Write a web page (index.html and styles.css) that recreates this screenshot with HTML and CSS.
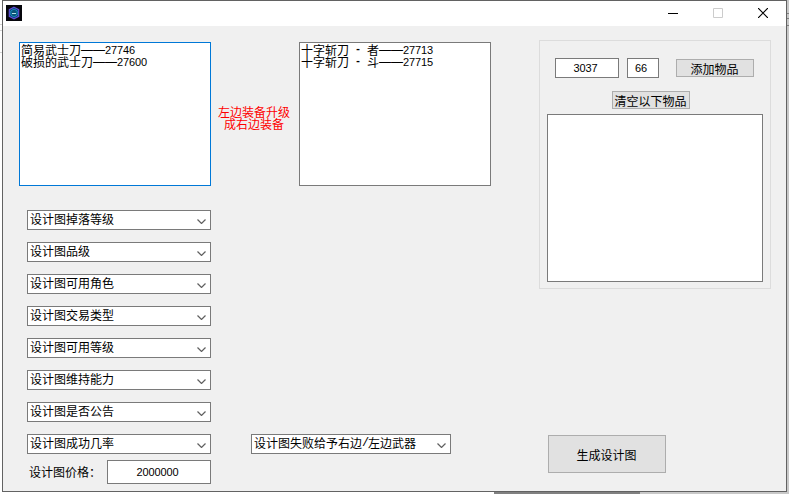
FILE: index.html
```html
<!DOCTYPE html>
<html lang="zh-CN">
<head>
<meta charset="utf-8">
<title>设计图</title>
<link rel="stylesheet" href="styles.css">
</head>
<body>
<div class="desktop">
<div class="window">
  <header class="titlebar">
    <svg class="app-icon" width="16" height="16" viewBox="0 0 16 16">
      <rect width="16" height="16" fill="#06060c"/>
      <path d="M8 2.2 12.7 4.6v6.8L8 13.8 3.3 11.4V4.6z" fill="#0b3c66" stroke="#5f4fd8" stroke-width="1.2"/>
      <path d="M8 4 11.2 5.8v4.4L8 12 4.8 10.2V5.8z" fill="#0b5478" stroke="#178fc4"/>
      <path d="M6 8.5h4" stroke="#b6e0e8"/>
    </svg>
    <div class="controls">
      <svg width="10" height="10" viewBox="0 0 10 10"><path d="M0 5.5h10" stroke="#000"/></svg>
      <svg width="10" height="10" viewBox="0 0 10 10"><path d="M.5.5h9v9h-9z" fill="none" stroke="#ccc"/></svg>
      <svg width="10" height="10" viewBox="0 0 10 10"><path d="M0 0 10 10M10 0 0 10" stroke="#000" stroke-width="1.2"/></svg>
    </div>
  </header>
  <main class="client">
    <section class="left">
      <div class="upgrade">
        <div class="box list focused"><div class="row">简易武士刀<span class="dash">——</span><span class="num">27746</span></div><div class="row">破损的武士刀<span class="dash">——</span><span class="num">27600</span></div></div>
        <div class="hint">左边装备升级<br>成右边装备</div>
        <div class="box list"><div class="row">十字斩刀<span class="gap hyphen"> - </span>者<span class="dash">——</span><span class="num">27713</span></div><div class="row">十字斩刀<span class="gap hyphen"> - </span>斗<span class="dash">——</span><span class="num">27715</span></div></div>
      </div>
      <div class="options">
        <div class="combos">
          <div class="box combo">设计图掉落等级<svg class="chev" viewBox="0 0 9 5"><path d="m.5.5 4 4 4-4"/></svg></div>
          <div class="box combo">设计图品级<svg class="chev" viewBox="0 0 9 5"><path d="m.5.5 4 4 4-4"/></svg></div>
          <div class="box combo">设计图可用角色<svg class="chev" viewBox="0 0 9 5"><path d="m.5.5 4 4 4-4"/></svg></div>
          <div class="box combo">设计图交易类型<svg class="chev" viewBox="0 0 9 5"><path d="m.5.5 4 4 4-4"/></svg></div>
          <div class="box combo">设计图可用等级<svg class="chev" viewBox="0 0 9 5"><path d="m.5.5 4 4 4-4"/></svg></div>
          <div class="box combo">设计图维持能力<svg class="chev" viewBox="0 0 9 5"><path d="m.5.5 4 4 4-4"/></svg></div>
          <div class="box combo">设计图是否公告<svg class="chev" viewBox="0 0 9 5"><path d="m.5.5 4 4 4-4"/></svg></div>
          <div class="box combo">设计图成功几率<svg class="chev" viewBox="0 0 9 5"><path d="m.5.5 4 4 4-4"/></svg></div>
        </div>
        <div class="box combo fail">设计图失败给予右边<span class="gap slash">/</span>左边武器<svg class="chev" viewBox="0 0 9 5"><path d="m.5.5 4 4 4-4"/></svg></div>
      </div>
      <div class="price"><span>设计图价格：</span><div class="box field num">2000000</div></div>
    </section>
    <section class="right">
      <div class="group">
        <div class="add">
          <div class="box field num code">3037</div>
          <div class="box field num count">66</div>
          <div class="button small">添加物品</div>
        </div>
        <div class="button small clear">清空以下物品</div>
        <div class="box items"></div>
      </div>
      <div class="button generate">生成设计图</div>
    </section>
  </main>
</div>
<div class="edge"></div>
</div>
</body>
</html>
```
FILE: styles.css
```css
* { box-sizing: border-box; }

body {
  margin: 0;
  overflow: hidden;
  font: 12px/12px "Noto Sans CJK SC", sans-serif;
  color: #000;
}

.desktop {
  display: flex;
  align-items: flex-start;
  width: 789px;
  height: 494px;
  padding-left: 2px;
  background:
    linear-gradient(#d4d4d4, #d4d4d4) 0 24px / 2px 1px no-repeat,
    linear-gradient(#d4d4d4, #d4d4d4) 0 30px / 2px 1px no-repeat,
    linear-gradient(#d4d4d4, #d4d4d4) 0 52px / 2px 1px no-repeat,
    linear-gradient(90deg, #fff 494px, #808080 494px 640px, #c8c8c8 640px);
}

.window {
  width: 785px;
  height: 492px;
  border: 1px solid #626262;
  background: #f0f0f0;
}

.edge {
  width: 2px;
  height: 494px;
  background:
    linear-gradient(#808080, #808080) 0 13px / 2px 1px no-repeat,
    linear-gradient(#808080, #808080) 0 18px / 2px 1px no-repeat,
    linear-gradient(#808080, #808080) 0 25px / 2px 1px no-repeat,
    #c8c8c8;
}

.titlebar {
  display: flex;
  justify-content: space-between;
  height: 25px;
  padding: 4px 18px 0 3px;
  background: #fff;
}

.controls {
  display: flex;
  gap: 35px;
  padding-top: 3px;
}

.client {
  display: flex;
  justify-content: space-between;
  padding: 14px 15px 0 16px;
}

.left { width: 472px; padding-top: 2px; }
.right { width: 232px; }

.box {
  border: 1px solid #7a7a7a;
  background: #fff;
}

.upgrade {
  display: flex;
  justify-content: space-between;
}

.list {
  width: 192px;
  height: 144px;
  padding: 1px;
}

.row {
  display: flex;
  align-items: center;
  height: 12px;
  white-space: nowrap;
}

.row .num { line-height: 12px; }

.dash {
  width: 24px;
  font-family: "Liberation Sans", sans-serif;
}

.focused { border-color: #0078d7; }

.hint {
  padding-top: 64px;
  margin-right: 2px;
  color: #f00;
  text-align: center;
}

.num {
  font-family: "Liberation Sans", sans-serif;
  font-size: 11px;
  letter-spacing: -0.117px;
}

.gap {
  font: 10px/12px "Liberation Mono", monospace;
  white-space: pre;
}

.hyphen { font-weight: bold; }
.slash { font-size: 12px; width: 6px; }

.options {
  display: flex;
  align-items: flex-end;
  gap: 40px;
  padding: 24px 0 0 8px;
}

.combos {
  display: grid;
  gap: 12px;
  width: 184px;
}

.combo {
  display: flex;
  align-items: center;
  height: 20px;
  padding: 0 4px 2px 2px;
}

.fail { width: 200px; }

.chev {
  width: 9px;
  height: 5px;
  margin: 5px 0 0 auto;
  fill: none;
  stroke: #606060;
  stroke-width: 1.2;
}

.price {
  display: flex;
  align-items: center;
  justify-content: space-between;
  width: 192px;
  padding: 6px 0 0 10px;
}

.field {
  display: flex;
  align-items: center;
  justify-content: center;
}

.price .field {
  width: 104px;
  height: 24px;
  padding-right: 3px;
}

.group {
  height: 249px;
  padding: 17px 7px 0;
  border: 1px solid #dcdcdc;
}

.add {
  display: flex;
  align-items: center;
  padding-left: 8px;
}

.code {
  width: 64px;
  height: 20px;
  margin-right: 8px;
  padding-right: 3px;
}

.count {
  width: 32px;
  height: 20px;
  margin-right: 17px;
  padding-right: 4px;
}

.button {
  display: flex;
  align-items: center;
  justify-content: center;
  border: 1px solid #adadad;
  background: #e1e1e1;
  white-space: nowrap;
}

.small {
  width: 78px;
  height: 18px;
  padding: 1px 1px 0 0;
}

.clear { margin: 13px 0 5px 65px; }

.items { height: 168px; }

.generate {
  width: 118px;
  height: 38px;
  margin: 146px 0 0 9px;
  padding: 1px 1px 0 0;
}
```
